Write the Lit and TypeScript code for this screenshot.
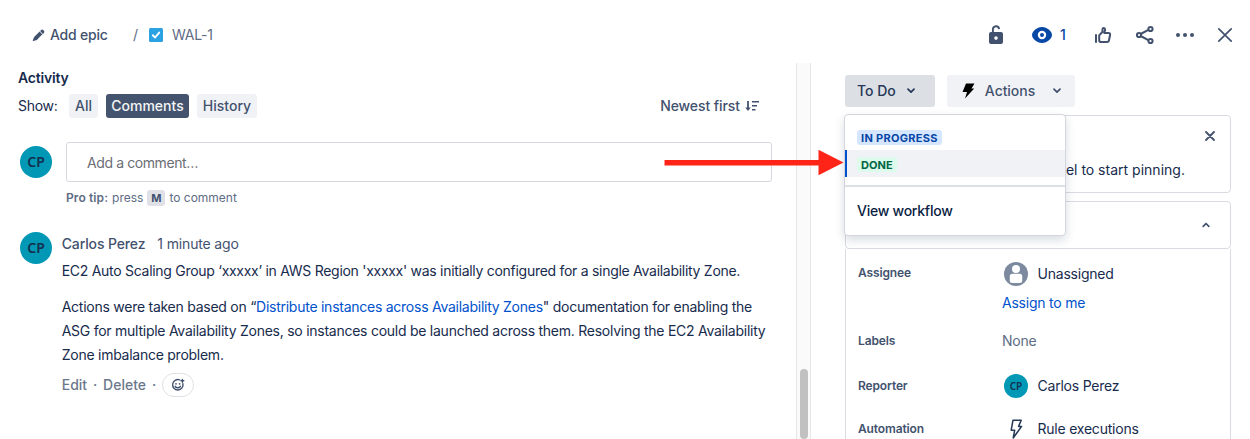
import { LitElement, html, css } from "lit";
import { customElement, property } from "lit/decorators.js";

const chevronDown = html`<svg class="chevron" width="8" height="6" viewBox="0 0 8 6"><path d="M1 1.2 4 4.2 7 1.2" fill="none" stroke="currentColor" stroke-width="1.7" stroke-linecap="round" stroke-linejoin="round"/></svg>`;

@customElement("user-avatar")
export class UserAvatar extends LitElement {
  @property() initials = "";
  static styles = css`
    :host {
      display: flex;
      align-items: center;
      justify-content: center;
      flex: none;
      box-sizing: border-box;
      border-radius: 50%;
      background: #0098b5;
      color: #12304f;
      font-family: "Noto Sans", "Open Sans", sans-serif;
      font-weight: 600;
    }
  `;
  render() {
    return html`<span>${this.initials}</span>`;
  }
}

@customElement("issue-header")
export class IssueHeader extends LitElement {
  static styles = css`
    :host {
      display: flex;
      justify-content: space-between;
      align-items: center;
      box-sizing: border-box;
      height: 63px;
      padding: 7px 17px 0 32px;
      color: #42526e;
    }
    svg { display: block; }
    .crumbs, .tools { display: flex; align-items: center; }
    .epic { margin-left: 5px; font-weight: 500; letter-spacing: -0.2px; width: 83px; }
    .slash { width: 16px; color: #5e6c84; }
    .key { margin-left: 9px; color: #5e6c84; letter-spacing: -0.25px; }
    .lock { margin-right: 28px; }
    .watch { color: #0747a6; margin-left: 8px; width: 34px; font-weight: 500; }
    .like { margin-right: 23px; }
    .share { margin-right: 21px; }
    .more { margin-right: 23px; }
  `;
  render() {
    return html`
      <div class="crumbs">
        <svg width="13" height="13" viewBox="0 0 13 13"><g fill="#42526e"><path d="M9.100 1.100a1.500 1.500 0 0 1 2.100 0l.7.7a1.500 1.500 0 0 1 0 2.100L10.900 4.900 8.100 2.100z"/><path d="M7.600 2.600 10.400 5.400Q12 3.800 4.900 10.900L1.300 12.100Q.7 12.200.8 11.600L2.100 8.100z"/></g></svg>
        <span class="epic">Add epic</span>
        <span class="slash">/</span>
        <svg width="14" height="14" viewBox="0 0 14 14"><rect width="14" height="14" rx="1.5" fill="#2ba3e3"/><path d="M3.800 7.300 6.100 9.500 10.200 4.600" fill="none" stroke="#fff" stroke-width="1.900" stroke-linecap="round" stroke-linejoin="round"/></svg>
        <span class="key">WAL-1</span>
      </div>
      <div class="tools">
        <svg class="lock" width="16" height="20" viewBox="0 0 16 20"><path d="M4.900 8V4.500a3.100 3.100 0 0 1 6.200-.4" fill="none" stroke="#42526e" stroke-width="1.900"/><path fill="#42526e" fill-rule="evenodd" d="M3 7h10a2 2 0 0 1 2 2v8a2 2 0 0 1-2 2H3a2 2 0 0 1-2-2V9a2 2 0 0 1 2-2Zm5 4.300a1.800 1.800 0 1 0 0 3.600 1.800 1.800 0 0 0 0-3.600Z"/></svg>
        <svg width="20" height="16" viewBox="0 0 20 16"><path fill="#0747a6" d="M10 0C4.600 0 0 4.600 0 8s4.600 8 10 8 10-4.600 10-8-4.600-8-10-8Z"/><circle cx="10" cy="8" r="3.100" fill="#0747a6" stroke="#fff" stroke-width="2.200"/></svg>
        <span class="watch">1</span>
        <svg class="like" width="18" height="18" viewBox="0 0 18 18"><g fill="none" stroke="#42526e" stroke-width="2" stroke-linejoin="round" stroke-linecap="round"><path d="M2 9v7"/><path d="M5.200 9.400 8.500 5.800V3.300c0-1.800 2.600-1.900 2.600.2 0 1.400-.6 2.300-.9 3.400h4.200c1.300 0 1.900.8 1.700 1.900l-1.100 5.500c-.2 1.100-.8 1.700-1.900 1.700H7c-1.200 0-1.800-.6-1.800-1.800Z"/></g></svg>
        <svg class="share" width="20" height="20" viewBox="0 0 20 20"><g fill="none" stroke="#42526e" stroke-width="2"><path d="M5.700 9 13.300 4.800M5.700 11 13.300 15.200"/><circle cx="4" cy="10" r="2.100"/><circle cx="15.500" cy="4" r="2.100"/><circle cx="15.500" cy="16" r="2.100"/></g></svg>
        <svg class="more" width="18" height="6" viewBox="0 0 18 6"><g fill="#42526e"><circle cx="2" cy="3" r="2"/><circle cx="9" cy="3" r="2"/><circle cx="16" cy="3" r="2"/></g></svg>
        <svg width="16" height="16" viewBox="0 0 16 16"><path d="M1.800 1.800 14.200 14.200M14.200 1.800 1.800 14.200" stroke="#42526e" stroke-width="1.700" stroke-linecap="round"/></svg>
      </div>
    `;
  }
}

@customElement("issue-activity")
export class IssueActivity extends LitElement {
  static styles = css`
    :host { display: block; padding: 5px 24px 0 18px; color: #172b4d; }
    svg { display: block; }
    h2 { margin: 0; font-size: 14px; line-height: 20px; font-weight: 600; letter-spacing: -0.2px; }
    .filters { display: flex; align-items: center; height: 24px; margin-top: 6px; }
    .show { width: 51px; letter-spacing: -0.3px; }
    .tab { box-sizing: border-box; height: 24px; line-height: 24px; margin-right: 8px; border-radius: 3px; background: #f1f2f6; color: #42526e; font-weight: 500; text-align: center; }
    .all { width: 29px; }
    .comments { width: 83px; background: #44546f; color: #f4f5f7; }
    .history { width: 60px; }
    .sort { display: flex; align-items: center; gap: 5px; margin-left: auto; margin-right: 12px; color: #42526e; font-weight: 500; }
    .newest { letter-spacing: -0.08px; }
    .compose { display: flex; margin-top: 24px; padding-left: 2px; gap: 14px; }
    .big { width: 32px; height: 32px; font-size: 14px; }
    .compose .big { margin-top: 4px; }
    .input { flex: 1; box-sizing: border-box; height: 40px; line-height: 40px; border: 1px solid #d5d8df; border-radius: 3px; padding-left: 20px; color: #6b6e76; }
    .placeholder { letter-spacing: -0.4px; }
    .tip { display: flex; align-items: center; height: 20px; margin: 6px 0 0 48px; font-size: 12px; color: #5e6c84; }
    .tip b { font-weight: 600; margin-right: 4px; letter-spacing: .1px; }
    kbd { font: inherit; font-weight: 700; background: #dfe1e6; color: #42526e; border-radius: 3px; width: 18px; height: 16px; line-height: 16px; text-align: center; margin: 0 4px; font-size: 11px; }
    .comment { display: flex; gap: 10px; margin-top: 24px; padding-left: 2px; }
    .body { flex: 1; white-space: nowrap; margin-left: -.3px; }
    .by { display: flex; gap: 12px; height: 24px; line-height: 24px; color: #42526e; }
    .by b { font-weight: 500; letter-spacing: -0.13px; }
    .when { letter-spacing: -0.15px; }
    p { margin: 3px 0 12px; line-height: 24px; letter-spacing: -0.282px; }
    p + p { margin: 0; letter-spacing: -0.256px; }
    a { color: #0052cc; }
    .acts { display: flex; align-items: center; height: 24px; margin-top: 6px; color: #6b778c; font-weight: 500; }
    .dot { width: 16px; text-align: center; }
    .react { box-sizing: border-box; width: 32px; height: 24px; border: 1px solid #dfe1e6; border-radius: 12px; display: flex; align-items: center; justify-content: center; }
  `;
  render() {
    return html`
      <h2>Activity</h2>
      <div class="filters">
        <span class="show">Show:</span>
        <span class="tab all">All</span><span class="tab comments">Comments</span><span class="tab history">History</span>
        <span class="sort"><span class="newest">Newest first</span>
          <svg width="15" height="14" viewBox="0 0 15 14"><g fill="none" stroke="#42526e" stroke-width="1.500"><path d="M3 2v8" stroke-width="1.800"/><path d="M7 2.700h7M7 6.700h5M7 10.700h3.500"/></g><path d="M.3 8.500h5.400L3 12z" fill="#42526e"/></svg>
        </span>
      </div>
      <div class="compose">
        <user-avatar class="big" initials="CP"></user-avatar>
        <div class="input"><span class="placeholder">Add a comment…</span></div>
      </div>
      <div class="tip"><b>Pro tip:</b><span>press</span><kbd>M</kbd><span>to comment</span></div>
      <div class="comment">
        <user-avatar class="big" initials="CP"></user-avatar>
        <div class="body">
          <div class="by"><b>Carlos Perez</b><span class="when">1 minute ago</span></div>
          <p>EC2 Auto Scaling Group ‘xxxxx’ in AWS Region 'xxxxx' was initially configured for a single Availability Zone.</p>
          <p>Actions were taken based on “<a>Distribute instances across Availability Zones</a>" documentation for enabling the<br />ASG for multiple Availability Zones, so instances could be launched across them. Resolving the EC2 Availability<br />Zone imbalance problem.</p>
          <div class="acts"><span>Edit</span><span class="dot">·</span><span>Delete</span><span class="dot">·</span>
            <span class="react"><svg width="14" height="14" viewBox="0 0 14 14"><g fill="none" stroke="#42526e" stroke-width="1.400" stroke-linecap="round"><path d="M8.600 1.900A5.200 5.200 0 1 0 11.900 5.600"/><path d="M4.200 8.300c1.200 2 4 2 5.200 0"/><path d="M11.400 1.400v2.800M10 2.800h2.800"/></g><circle cx="5" cy="5.800" r=".9" fill="#42526e"/><circle cx="8.600" cy="5.800" r=".9" fill="#42526e"/></svg></span>
          </div>
        </div>
      </div>
    `;
  }
}

@customElement("issue-details")
export class IssueDetails extends LitElement {
  static styles = css`
    :host { display: block; position: relative; padding: 12px 19px 0 34px; color: #172b4d; }
    svg { display: block; }
    .buttons { display: flex; gap: 12px; height: 32px; }
    .btn { box-sizing: border-box; display: flex; align-items: center; border-radius: 3px; padding-left: 12px; font-weight: 500; }
    .status { width: 90px; background: #dcdfe4; color: #253858; justify-content: space-between; padding-right: 20px; }
    .actions { width: 128px; background: #f1f2f6; color: #42526e; justify-content: space-between; padding: 0 14px 0 15px; }
    .actions .label { margin-right: 8px; letter-spacing: -0.05px; }
    .card { box-sizing: border-box; border: 1px solid #d8dbe2; border-radius: 4px; }
    .pin { height: 78px; margin-top: 8px; display: flex; flex-direction: column; align-items: flex-end; padding: 15px 15px 0 0; }
    .pin p { margin: 19px 30px 0 0; line-height: 20px; letter-spacing: .02px; word-spacing: -.1px; }
    .head { height: 48px; margin-top: 8px; display: flex; align-items: center; justify-content: flex-end; padding-right: 20px; }
    .fields { box-sizing: border-box; height: 191px; border: 1px solid #d8dbe2; border-width: 0 1px; padding: 0 12px; overflow: hidden; }
    .row { display: grid; grid-template-columns: 144px 1fr; }
    .name { font-size: 12px; font-weight: 600; line-height: 16px; color: #42526e; letter-spacing: -0.13px; }
    .val { display: flex; align-items: center; height: 24px; line-height: 24px; letter-spacing: -0.22px; }
    .ico { width: 24px; height: 24px; margin: 0 9.500px 0 2px; flex: none; font-size: 10px; letter-spacing: 0; }
    .assignee { height: 67px; padding-top: 13px; }
    .assignee .name { margin-top: 3px; }
    .labels, .reporter, .automation { align-items: center; }
    .labels { height: 24px; margin-bottom: 21px; }
    .none { color: #5e6c84; letter-spacing: -0.2px; }
    .reporter { height: 24px; margin-bottom: 19px; }
    .automation { height: 24px; }
    .assign { display: block; color: #0052cc; line-height: 20px; margin-top: 7px; letter-spacing: -0.22px; }
    .menu { position: absolute; left: 33px; top: 51px; box-sizing: border-box; width: 222px; height: 122px; background: #fff; border: 1px solid #d3d6dd; border-radius: 4px; box-shadow: 0 4px 10px rgba(9, 30, 66, .16); padding-top: 8px; }
    .item { box-sizing: border-box; height: 27px; display: flex; align-items: center; padding: 1px 0 0 12px; }
    .chosen { background: #f1f2f6; border-left: 2px solid #0052cc; padding-left: 10px; }
    .tag { height: 15px; line-height: 16px; border-radius: 3px; padding: 0 4px; font-size: 11px; font-weight: 700; }
    .progress { background: #d6e6ff; color: #0747a6; letter-spacing: .3px; }
    .done { background: #dcfbec; color: #006644; letter-spacing: .1px; }
    .rule { height: 2px; background: #dcdfe4; margin: 8px 0 14px; }
    .flow { padding-left: 12px; line-height: 20px; font-weight: 500; letter-spacing: -0.25px; color: #091e42; }
  `;
  render() {
    return html`
      <div class="buttons">
        <div class="btn status"><span>To Do</span>${chevronDown}</div>
        <div class="btn actions">
          <svg width="13" height="16" viewBox="0 0 13 16"><path d="M4 .5h8.500L9.500 5.500H12.200L3 15.500 5 9H.5z" fill="#000"/></svg>
          <span class="label">Actions</span>${chevronDown}
        </div>
      </div>
      <div class="card pin">
        <svg width="10" height="10" viewBox="0 0 10 10"><path d="M1 1 9 9M9 1 1 9" stroke="#42526e" stroke-width="1.800" stroke-linecap="round"/></svg>
        <p>label to start pinning.</p>
      </div>
      <div class="card head">
        <svg width="8" height="6" viewBox="0 0 8 6"><path d="M1.200 4.300 4 1.500 6.800 4.300" fill="none" stroke="#42526e" stroke-width="1.700" stroke-linecap="round" stroke-linejoin="round"/></svg>
      </div>
      <div class="fields">
        <div class="row assignee"><span class="name">Assignee</span>
          <div><div class="val"><svg class="ico" viewBox="0 0 24 24"><circle cx="12" cy="12" r="12" fill="#7d899e"/><circle cx="12" cy="6.900" r="4" fill="#fff"/><rect x="5.800" y="11.800" width="12.400" height="9.200" rx="2.500" fill="#fff"/></svg><span>Unassigned</span></div>
          <a class="assign">Assign to me</a></div>
        </div>
        <div class="row labels"><span class="name">Labels</span><span class="none">None</span></div>
        <div class="row reporter"><span class="name">Reporter</span><div class="val"><user-avatar class="ico" initials="CP"></user-avatar><span>Carlos Perez</span></div></div>
        <div class="row automation"><span class="name">Automation</span><div class="val"><svg class="ico" viewBox="0 0 24 24"><path d="M9 3.200h8.200L14.600 9.400h3L9.200 21l1.500-7.800H7.200z" fill="none" stroke="#253858" stroke-width="1.500" stroke-linejoin="round"/></svg><span>Rule executions</span></div></div>
      </div>
      <div class="menu">
        <div class="item"><span class="tag progress">IN PROGRESS</span></div>
        <div class="item chosen"><span class="tag done">DONE</span></div>
        <div class="rule"></div>
        <div class="flow">View workflow</div>
      </div>
    `;
  }
}

@customElement("app-root")
export class AppRoot extends LitElement {
  static styles = css`
    :host {
      display: block;
      position: relative;
      height: 439px;
      overflow: hidden;
      background: #fff;
      font: 14px/20px Inter, "Liberation Sans", sans-serif;
    }
    .main { display: grid; grid-template-columns: 796px 15px 439px; height: 376px; }
    .track { box-sizing: border-box; border: 1px solid #e6e6e6; border-width: 0 1px; background: #fafafa; display: flex; flex-direction: column; justify-content: flex-end; align-items: center; padding: 0 0 1px 1px; }
    .thumb { width: 8px; height: 70px; border-radius: 4px; background: #c1c1c1; }
    .arrow { position: absolute; left: 664px; top: 149px; }
  `;
  render() {
    return html`
      <issue-header></issue-header>
      <div class="main">
        <issue-activity></issue-activity>
        <div class="track"><div class="thumb"></div></div>
        <issue-details></issue-details>
      </div>
      <svg class="arrow" width="180" height="27" viewBox="0 0 180 27"><path d="M.5 11H154.500V.8L179.500 13.500 154.500 26.200V16.500H.5z" fill="#ff2418"/></svg>
    `;
  }
}
